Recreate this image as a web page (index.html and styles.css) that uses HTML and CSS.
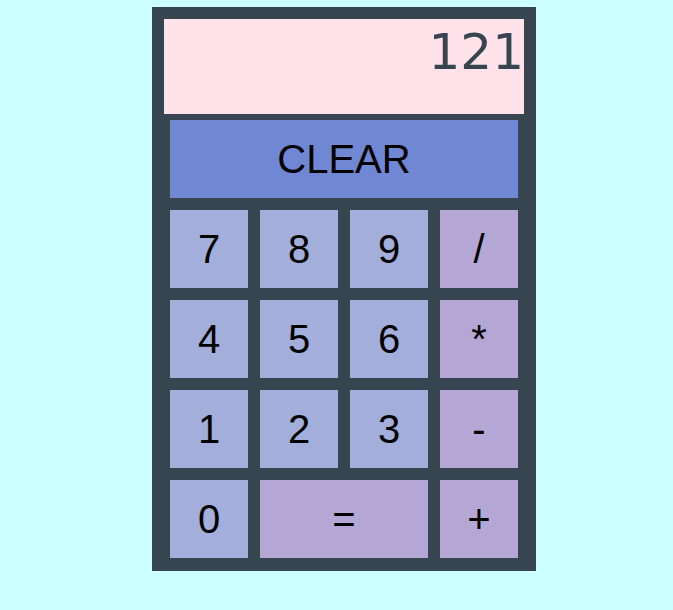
FILE: index.html
```html
<!DOCTYPE html>
<html lang="en">
<head>
<meta charset="utf-8">
<title>Calculator</title>
<link rel="stylesheet" href="styles.css">
</head>
<body>
<main class="calculator">
  <output class="display" aria-label="Result">121</output>
  <div class="keys">
    <button type="button" class="key clear">CLEAR</button>
    <button type="button" class="key">7</button>
    <button type="button" class="key">8</button>
    <button type="button" class="key">9</button>
    <button type="button" class="key operator">/</button>
    <button type="button" class="key">4</button>
    <button type="button" class="key">5</button>
    <button type="button" class="key">6</button>
    <button type="button" class="key operator">*</button>
    <button type="button" class="key">1</button>
    <button type="button" class="key">2</button>
    <button type="button" class="key">3</button>
    <button type="button" class="key operator">-</button>
    <button type="button" class="key">0</button>
    <button type="button" class="key operator equals">=</button>
    <button type="button" class="key operator">+</button>
  </div>
</main>
</body>
</html>
```

FILE: styles.css
```css
* {
  box-sizing: border-box;
}

body {
  margin: 7px 0 0 15px;
  background: #ccffff;
  display: flex;
  justify-content: center;
}

.calculator {
  flex: 0 1 384px;
  padding: 12px 12px 13px;
  background: #36454f;
}

.display {
  display: block;
  min-height: 95px;
  padding-top: 4px;
  background: #ffe2ea;
  color: #36454f;
  font: 50px/58px "DejaVu Sans", Verdana, sans-serif;
  text-align: right;
}

.keys {
  display: grid;
  grid-template-columns: repeat(4, 1fr);
  grid-auto-rows: 78px;
  gap: 12px;
  padding: 6px 6px 0;
}

.key {
  border: 0;
  padding: 0;
  background: #a3aedb;
  color: #000;
  font: 40px "Liberation Sans", Arial, sans-serif;
}

.clear {
  grid-column: 1 / -1;
  background: #7088d3;
}

.operator {
  background: #b4a7d6;
}

.equals {
  grid-column: span 2;
}
```
